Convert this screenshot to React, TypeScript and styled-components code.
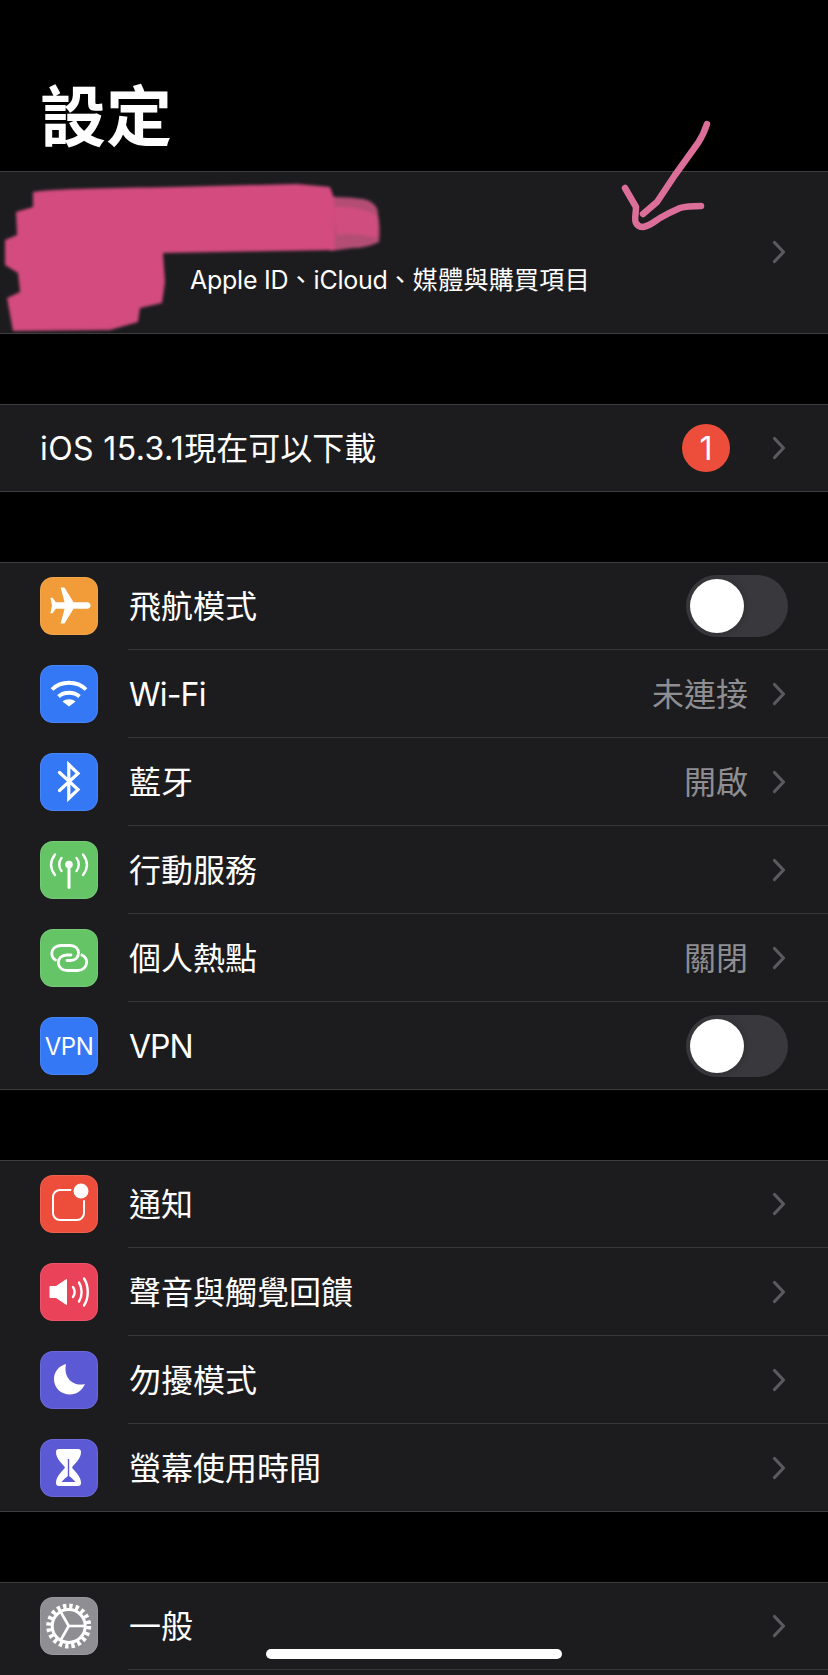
import React from "react";
import styled, { createGlobalStyle } from "styled-components";

const GlobalStyle = createGlobalStyle`
  html, body {
    margin: 0;
    padding: 0;
    background: #000000;
  }
`;

const Page = styled.div`
  position: relative;
  width: 828px;
  height: 1675px;
  overflow: hidden;
  background: #000000;
  color: #ffffff;
  font-family: Inter, "Noto Sans CJK TC", sans-serif;
`;

const Title = styled.h1`
  margin: 0;
  height: 171px;
  box-sizing: border-box;
  padding: 68px 0 0 40px;
  font-family: "Noto Sans CJK TC", sans-serif;
  font-size: 66px;
  line-height: 88px;
  font-weight: 700;
`;

const Group = styled.section`
  background: #1c1c1e;
  border-top: 1px solid #3d3d40;
  border-bottom: 1px solid #3d3d40;
  margin-bottom: 70px;
`;

const ProfileRow = styled.div`
  height: 161px;
  box-sizing: border-box;
  display: flex;
  align-items: center;
  justify-content: space-between;
  padding: 0 42px 2px 190px;
`;

const ProfileText = styled.div`
  margin-top: 56px;
  font-size: 25px;
  line-height: 30px;
  letter-spacing: 0.3px;
`;

const Latin = styled.span<{ $tracking: number }>`
  letter-spacing: ${(p) => p.$tracking}px;
`;

const Row = styled.div`
  height: 88px;
  display: flex;
  align-items: center;
  padding-left: 40px;
  &:first-child {
    margin-top: -1px;
  }
  &:last-child {
    margin-bottom: -1px;
  }
`;

const IconBox = styled.div<{ $bg: string }>`
  width: 58px;
  height: 58px;
  flex: none;
  border-radius: 13px;
  background: ${(p) => p.$bg};
  box-shadow: inset 0 0 0 1px rgba(255, 255, 255, 0.1);
  display: flex;
  align-items: center;
  justify-content: center;
  margin-right: 31px;
  font-size: 24px;
  letter-spacing: -0.5px;
`;

const RowBody = styled.div<{ $last?: boolean; $inset?: number }>`
  flex: 1;
  height: 100%;
  box-sizing: border-box;
  display: flex;
  align-items: center;
  margin-left: -1px;
  padding-left: 1px;
  padding-right: ${(p) => p.$inset ?? 42}px;
  border-bottom: ${(p) => (p.$last ? "none" : "1px solid #38383a")};
`;

const Label = styled.div<{ $tracking?: number }>`
  flex: 1;
  padding-top: 2px;
  font-size: 32px;
  line-height: 44px;
  letter-spacing: ${(p) => p.$tracking ?? 0}px;
`;

const UpdateRow = styled.div`
  height: 86px;
  display: flex;
  align-items: center;
  padding: 0 42px 0 40px;
`;

const Value = styled.span`
  padding-top: 2px;
  font-size: 32px;
  line-height: 44px;
  color: #8e8e93;
  margin-right: 24px;
`;

const Badge = styled.span`
  width: 48px;
  height: 48px;
  border-radius: 50%;
  background: #ed4e3c;
  display: flex;
  align-items: center;
  justify-content: center;
  font-size: 32px;
  margin-right: 42px;
`;

const Track = styled.div`
  width: 102px;
  height: 62px;
  box-sizing: border-box;
  padding: 4px;
  border-radius: 31px;
  background: #39393d;
`;

const Knob = styled.div`
  width: 54px;
  height: 54px;
  border-radius: 50%;
  background: #ffffff;
  box-shadow: 2px 0 6px rgba(0, 0, 0, 0.18);
`;

const Overlay = styled.svg`
  position: absolute;
  left: 0;
  top: 0;
  pointer-events: none;
`;

const HomeBar = styled.div`
  position: absolute;
  left: 266px;
  top: 1649px;
  width: 296px;
  height: 10px;
  border-radius: 5px;
  background: #ffffff;
`;

const Glyph = ({ children }: { children: React.ReactNode }) => (
  <svg width="58" height="58" viewBox="0 0 58 58" fill="none">
    {children}
  </svg>
);

const Chevron = () => (
  <svg width="14" height="24" viewBox="0 0 14 24" fill="none">
    <path d="M2.5 2.5 11.5 12 2.5 21.5" stroke="#5b5b5f" strokeWidth="3.2" strokeLinecap="round" strokeLinejoin="round" />
  </svg>
);

const Toggle = () => (
  <Track>
    <Knob />
  </Track>
);

const PlaneIcon = () => (
  <Glyph>
    <path
      d="M47 25.2H33.5L24.5 10.5H20.6L24.6 25.2H15.8L12.6 20.8H10.4L12 28.5 10.4 36.2H12.6L15.8 31.8H24.6L20.6 46.5H24.5L33.5 31.8H47C51.8 31.8 51.8 25.2 47 25.2Z"
      fill="#fff"
    />
  </Glyph>
);

const WifiIcon = () => (
  <Glyph>
    <path d="M12 24.5C21 15.5 37 15.5 46 24.5" stroke="#fff" strokeWidth="3.8" />
    <path d="M18.5 31.5C24 26.5 34 26.5 39.5 31.5" stroke="#fff" strokeWidth="3.8" />
    <path d="M29 41.5 22.5 36.5C26 33.5 32 33.5 35.5 36.5Z" fill="#fff" />
  </Glyph>
);

const BluetoothIcon = () => (
  <Glyph>
    <path
      d="M19.5 19.5 38 36.5 28.8 45.5V11.5L38 20.5 19.5 37.5"
      stroke="#fff"
      strokeWidth="3.2"
      strokeLinejoin="miter"
      strokeLinecap="round"
    />
  </Glyph>
);

const CellularIcon = () => (
  <Glyph>
    <circle cx="29" cy="23.5" r="3.8" fill="#fff" />
    <path d="M29 25V46.5" stroke="#fff" strokeWidth="3" strokeLinecap="round" />
    <g stroke="#fff" strokeWidth="2.4" strokeLinecap="round">
      <path d="M21.5 17C18.5 20.5 18.5 26.5 21.5 30" />
      <path d="M36.5 17C39.5 20.5 39.5 26.5 36.5 30" />
      <path d="M15 13.5C10 20 10 27.5 15 34" />
      <path d="M43 13.5C48 20 48 27.5 43 34" />
    </g>
  </Glyph>
);

const HotspotIcon = () => (
  <Glyph>
    <g stroke="#fff" strokeWidth="2.8" strokeLinecap="round">
      <path d="M15.5 31C13 29.5 11.8 27 11.8 24.5C11.8 20 15.5 16.5 21 16.5H30C35.5 16.5 38.5 20 38.5 24C38.5 28.5 35 31.5 30.5 31.5H27" />
      <path d="M41.8 26C45 27.5 46.7 30 46.7 33C46.7 37.5 43 41.5 37.5 41.5H27C22 41.5 18.3 38 18.3 33.5C18.3 29.5 21.5 26 27 26H31" />
    </g>
  </Glyph>
);

const NotificationIcon = () => (
  <Glyph>
    <rect x="13" y="15" width="31" height="30" rx="7" stroke="#fff" strokeWidth="2" />
    <circle cx="41" cy="16" r="10" fill="#ed4e3c" />
    <circle cx="41" cy="16" r="7.5" fill="#fff" />
  </Glyph>
);

const SoundIcon = () => (
  <Glyph>
    <path d="M10 23.5H16L26.5 16.5V41.5L16 34.5H10Z" fill="#fff" stroke="#fff" strokeWidth="1" strokeLinejoin="round" />
    <g stroke="#fff" strokeWidth="2.4" strokeLinecap="round">
      <path d="M33 24C35 27 35 31 33 34" />
      <path d="M39 19.5C42.5 25 42.5 33 39 38.5" />
    </g>
    <path d="M44 15.5C49 23 49 35 44 42.5" stroke="#fff" strokeWidth="2.4" strokeLinecap="round" />
  </Glyph>
);

const MoonIcon = () => (
  <Glyph>
    <path d="M26 13C18.5 15 14 21 14 28C14 37 21 43.5 30 43.5C36.5 43.5 42 39.5 45 33C33.5 36 23 27 26 13Z" fill="#fff" />
  </Glyph>
);

const HourglassIcon = () => (
  <Glyph>
    <path
      d="M19 10H38C40 10 41 11 41 13C41 20 35 24 32 28.5C35 33 41 37 41 44C41 46 40 47 38 47H19C17 47 16 46 16 44C16 37 22 33 25 28.5C22 24 16 20 16 13C16 11 17 10 19 10Z"
      fill="#fff"
    />
    <path d="M28.5 20V37" stroke="#5b59d4" strokeWidth="1.4" />
    <path d="M21.5 43C24 40 26.5 38 28.5 36.5C30.5 38 33 40 35.5 43Z" fill="#5b59d4" />
  </Glyph>
);

const GearIcon = () => (
  <Glyph>
    <circle cx="28.7" cy="29" r="20" stroke="#fff" strokeWidth="5" strokeDasharray="3.4 2.88" />
    <circle cx="28.7" cy="29" r="16.5" stroke="#fff" strokeWidth="3" />
    <g stroke="#fff" strokeWidth="2.6">
      <path d="M28.7 29 20.5 14.5" />
      <path d="M28.7 29H45" />
      <path d="M28.7 29 20.5 43.5" />
    </g>
  </Glyph>
);

type SettingRow = {
  label: string;
  bg: string;
  icon: React.ReactNode;
  value?: string;
  toggle?: boolean;
  tracking?: number;
};

const network: SettingRow[] = [
  { label: "飛航模式", bg: "#f19c38", icon: <PlaneIcon />, toggle: true },
  { label: "Wi-Fi", bg: "#3478f6", icon: <WifiIcon />, value: "未連接", tracking: -0.8 },
  { label: "藍牙", bg: "#3478f6", icon: <BluetoothIcon />, value: "開啟" },
  { label: "行動服務", bg: "#65c466", icon: <CellularIcon /> },
  { label: "個人熱點", bg: "#65c466", icon: <HotspotIcon />, value: "關閉" },
  { label: "VPN", bg: "#3478f6", icon: "VPN", toggle: true, tracking: -1 },
];

const alerts: SettingRow[] = [
  { label: "通知", bg: "#ed4e3c", icon: <NotificationIcon /> },
  { label: "聲音與觸覺回饋", bg: "#ea4259", icon: <SoundIcon /> },
  { label: "勿擾模式", bg: "#5b59d4", icon: <MoonIcon /> },
  { label: "螢幕使用時間", bg: "#5b59d4", icon: <HourglassIcon /> },
];

// second row only shows its top edge, the rest is below the fold
const general: SettingRow[] = [
  { label: "一般", bg: "#8e8e93", icon: <GearIcon /> },
  { label: "", bg: "#8e8e93", icon: null },
];

const SettingsGroup = ({ rows }: { rows: SettingRow[] }) => (
  <Group>
    {rows.map((row, i) => (
      <Row key={i}>
        <IconBox $bg={row.bg}>{row.icon}</IconBox>
        <RowBody $last={i === rows.length - 1} $inset={row.toggle ? 40 : 42}>
          <Label $tracking={row.tracking}>{row.label}</Label>
          {row.value && <Value>{row.value}</Value>}
          {row.toggle ? <Toggle /> : <Chevron />}
        </RowBody>
      </Row>
    ))}
  </Group>
);

// hand drawn censor scribble and arrow sitting on top of the screenshot
const Scribble = () => (
  <Overlay width="828" height="340" viewBox="0 0 828 340" fill="none">
    <defs>
      <filter id="soft" x="-5%" y="-5%" width="110%" height="110%">
        <feGaussianBlur stdDeviation="1.6" />
      </filter>
    </defs>
    <g filter="url(#soft)">
      <path d="M330 197C345 197 360 198 367 200C374 203 378 207 378 214C380 224 380 234 379 242C370 246 362 248 353 248L330 251Z" fill="#b34d73" />
      <path d="M332 207C350 206 366 209 377 216C378 224 378 232 376 238C362 234 350 233 337 235Z" fill="#d04d80" />
      <path
        d="M33 192C50 189 110 188 173 187L297 184 330 187 334 198 335 250 163 253 165 282 162 303 140 308 138 322 110 330 13 331 7 298 20 292 18 273 5 265 5 240 17 235 16 212 33 207Z"
        fill="#d34c7f"
      />
    </g>
    <g stroke="#dc6f99" strokeWidth="6.5" strokeLinecap="round" strokeLinejoin="round">
      <path d="M707 124C705 130 702 137 698 143L675 175 657 202 643 214" />
      <path d="M625 188 636 207C636 214 634 220 636 223C638 227 641 227 643 227C650 226 655 221 660 218C667 214 673 211 680 208C687 206 694 206 701 206" />
    </g>
  </Overlay>
);

export default function App() {
  return (
    <Page>
      <GlobalStyle />
      <Title>設定</Title>
      <Group>
        <ProfileRow>
          <ProfileText>
            <Latin $tracking={-0.25}>Apple ID</Latin>、<Latin $tracking={-0.25}>iCloud</Latin>、媒體與購買項目
          </ProfileText>
          <Chevron />
        </ProfileRow>
      </Group>
      <Group>
        <UpdateRow>
          <Label>
            <Latin $tracking={0.4}>iOS 15.3.1</Latin>現在可以下載
          </Label>
          <Badge>1</Badge>
          <Chevron />
        </UpdateRow>
      </Group>
      <SettingsGroup rows={network} />
      <SettingsGroup rows={alerts} />
      <SettingsGroup rows={general} />
      <Scribble />
      <HomeBar />
    </Page>
  );
}
